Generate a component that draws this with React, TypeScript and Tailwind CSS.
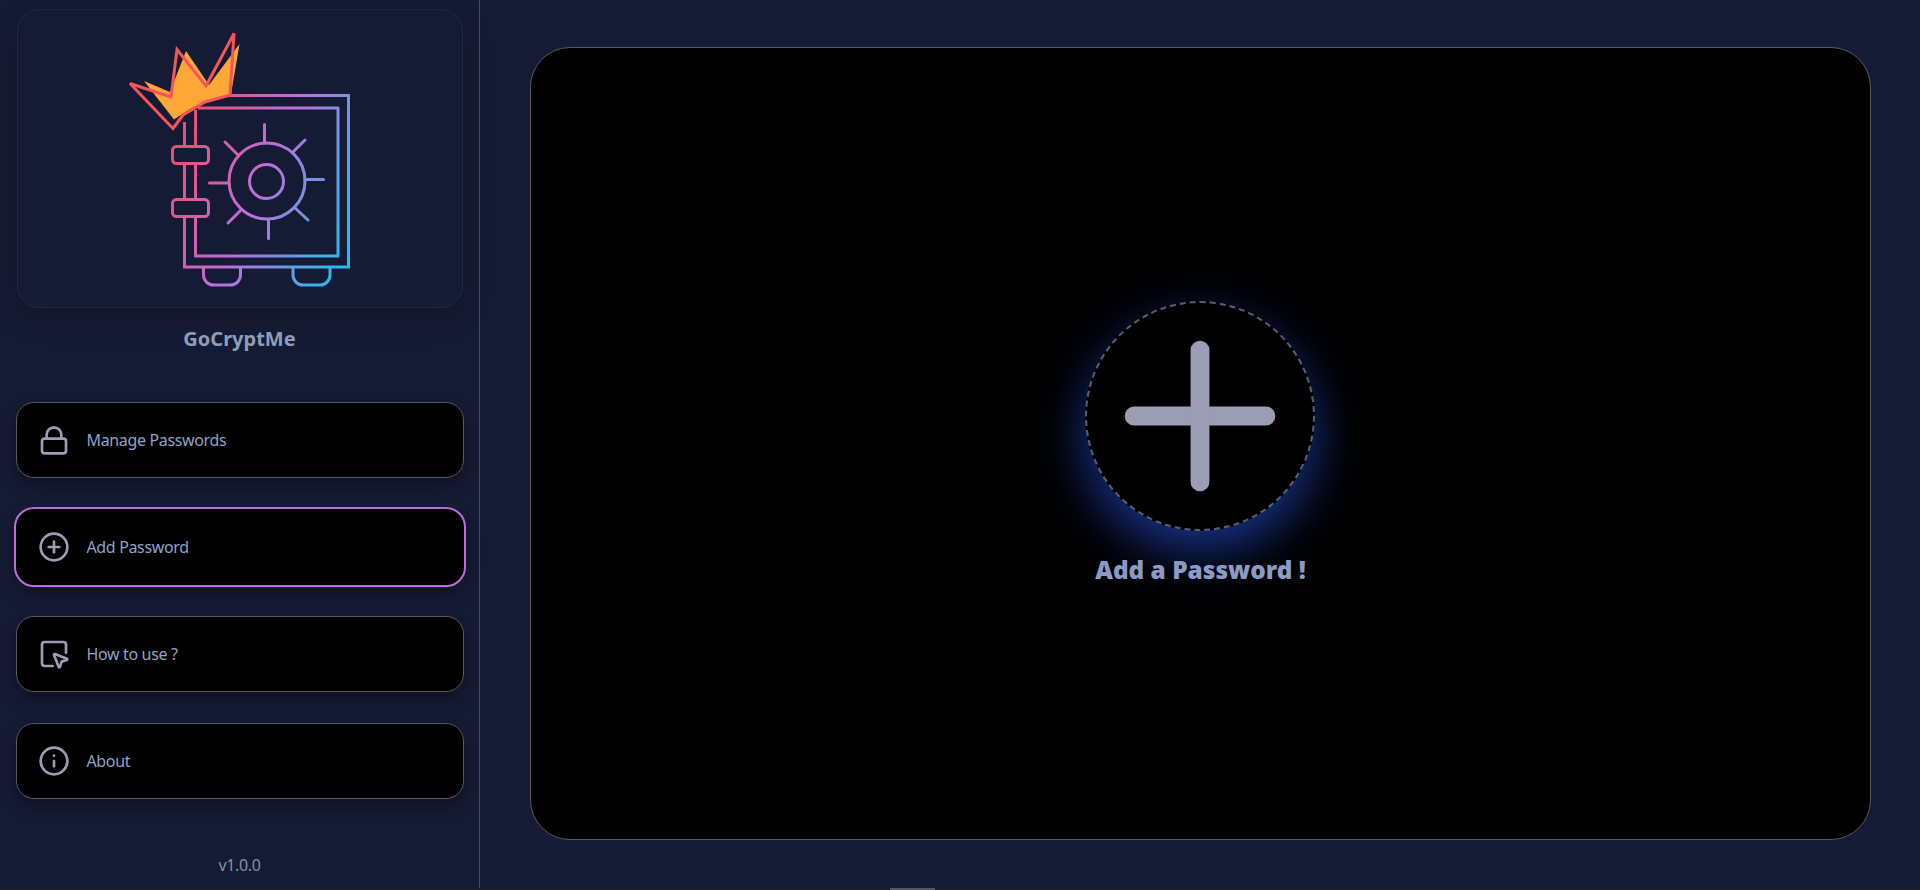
import React from 'react';
import { CirclePlus, Info, Plus, SquareMousePointer } from 'lucide-react';

function LockIcon({ size, className }: { size: number; strokeWidth?: number; className?: string }) {
  return (
    <svg width={size} height={size} viewBox="0 0 24 24" fill="none" stroke="currentColor" strokeWidth="2" strokeLinecap="round" strokeLinejoin="round" className={className}>
      <rect x="3" y="11" width="18" height="11" rx="2" />
      <path d="M6.5 11V8a5.5 5.5 0 0 1 11 0v3" />
    </svg>
  );
}

function SafeLogo() {
  return (
    <svg width="239" height="266" viewBox="120 26 239 266" fill="none">
      <defs>
        <linearGradient id="safe" gradientUnits="userSpaceOnUse" x1="176" y1="148" x2="366" y2="231">
          <stop offset="0" stopColor="#e8506f" />
          <stop offset="0.45" stopColor="#bd6fdc" />
          <stop offset="1" stopColor="#14c4ec" />
        </linearGradient>
      </defs>
      <g stroke="url(#safe)" strokeWidth="3">
        <path d="M228 95.5H348.5V267H184.5V217M184.5 199V164M184.5 146V122" />
        <path d="M198 108H338V256H195.5V217M195.5 199V164M195.5 146V110" strokeLinejoin="round" />
        <rect x="172.5" y="146.5" width="36" height="17" rx="4" />
        <rect x="172.5" y="199.5" width="36" height="17" rx="4" />
        <path d="M203.5 268v7a10 10 0 0 0 10 10h17a10 10 0 0 0 10-10v-7" />
        <path d="M293 268v7a10 10 0 0 0 10 10h17a10 10 0 0 0 10-10v-7" />
        <circle cx="267" cy="181" r="38" />
        <circle cx="266.5" cy="181.5" r="17" />
        <g strokeLinecap="round">
          <path d="M264.5 124.5V143" />
          <path d="M305 179.5H323.5" />
          <path d="M268.5 220V238.5" />
          <path d="M209.5 183H229" />
          <path d="M293 152L305 140" />
          <path d="M225 142L238 155" />
          <path d="M295 208L308 220" />
          <path d="M228 223L240 211" />
        </g>
      </g>
      <path d="M144 81L170 92L186 51L209 85L239.5 44L231 94L210 100L190 109L174 119.5Z" fill="#fea736" />
      <path d="M130 83.5L171 97L177 49.5L206 86L234 33.5L230 95L205 102L183 115L173 128.5Z" stroke="#f5555a" strokeWidth="3" />
    </svg>
  );
}

const navItems = [
  { label: 'Manage Passwords', icon: LockIcon },
  { label: 'Add Password', icon: CirclePlus, active: true },
  { label: 'How to use ?', icon: SquareMousePointer },
  { label: 'About', icon: Info },
];

export default function App() {
  return (
    <div className="flex h-screen flex-col overflow-hidden bg-[#151b34] font-['Noto_Sans',sans-serif]">
      <div className="flex min-h-0 flex-1">
        {/* Sidebar */}
        <aside className="flex w-[480px] shrink-0 flex-col items-center border-r border-[#4a4d5c]">
          <div className="mt-[9px] flex h-[299px] w-[446px] items-center justify-center rounded-[22px] border border-[#1f2a3c] shadow-[0_10px_30px_rgba(0,0,0,0.18)]">
            <SafeLogo />
          </div>
          <h1 className="mt-[17px] text-[20px] leading-[28px] font-bold text-[#8f9db8]">GoCryptMe</h1>

          <nav className="mt-[49px] flex w-[448px] flex-col gap-[31px]">
            {navItems.map((item) => {
              const Icon = item.icon;
              return (
                <button
                  key={item.label}
                  className={
                    item.active
                      ? 'mx-[-2px] my-[-2px] flex h-[80px] items-center gap-[17px] rounded-[20px] border-2 border-[#c06be0] bg-black pl-[22px] shadow-[0_8px_16px_rgba(0,0,0,0.3)]'
                      : 'flex h-[76px] items-center gap-[17px] rounded-[18px] border border-[#57585e] bg-black pl-[21px] shadow-[0_8px_16px_rgba(0,0,0,0.3)]'
                  }
                >
                  <Icon size={32} strokeWidth={2} className="text-[#9a9db3]" />
                  <span className="text-[16px] tracking-[-0.35px] text-[#8fa3c7]">{item.label}</span>
                </button>
              );
            })}
          </nav>

          <div className="mt-auto mb-[11px] text-[16px] leading-[24px] tracking-[-0.35px] text-[#8890a3]">v1.0.0</div>
        </aside>

        {/* Main */}
        <main className="flex flex-1 pt-[47px] pr-[49px] pb-[48px] pl-[50px]">
          <div className="flex flex-1 flex-col items-center justify-center rounded-[40px] border border-[#57585e] bg-black">
            <div className="mr-[2px] flex h-[230px] w-[230px] items-center justify-center rounded-full border-2 border-dashed border-[#5b5e73] bg-black shadow-[0_20px_50px_rgba(30,64,175,0.8)]">
              <Plus size={228} strokeWidth={2} className="text-[#9a9db3]" />
            </div>
            <div className="mt-[23px] text-[24.4px] leading-[32px] font-black text-[#8c9bc5]">Add a Password !</div>
          </div>
        </main>
      </div>
      <div className="h-[2px] bg-[#1b1d28]">
        <div className="ml-[890px] h-full w-[45px] bg-[#55565f]" />
      </div>
    </div>
  );
}
